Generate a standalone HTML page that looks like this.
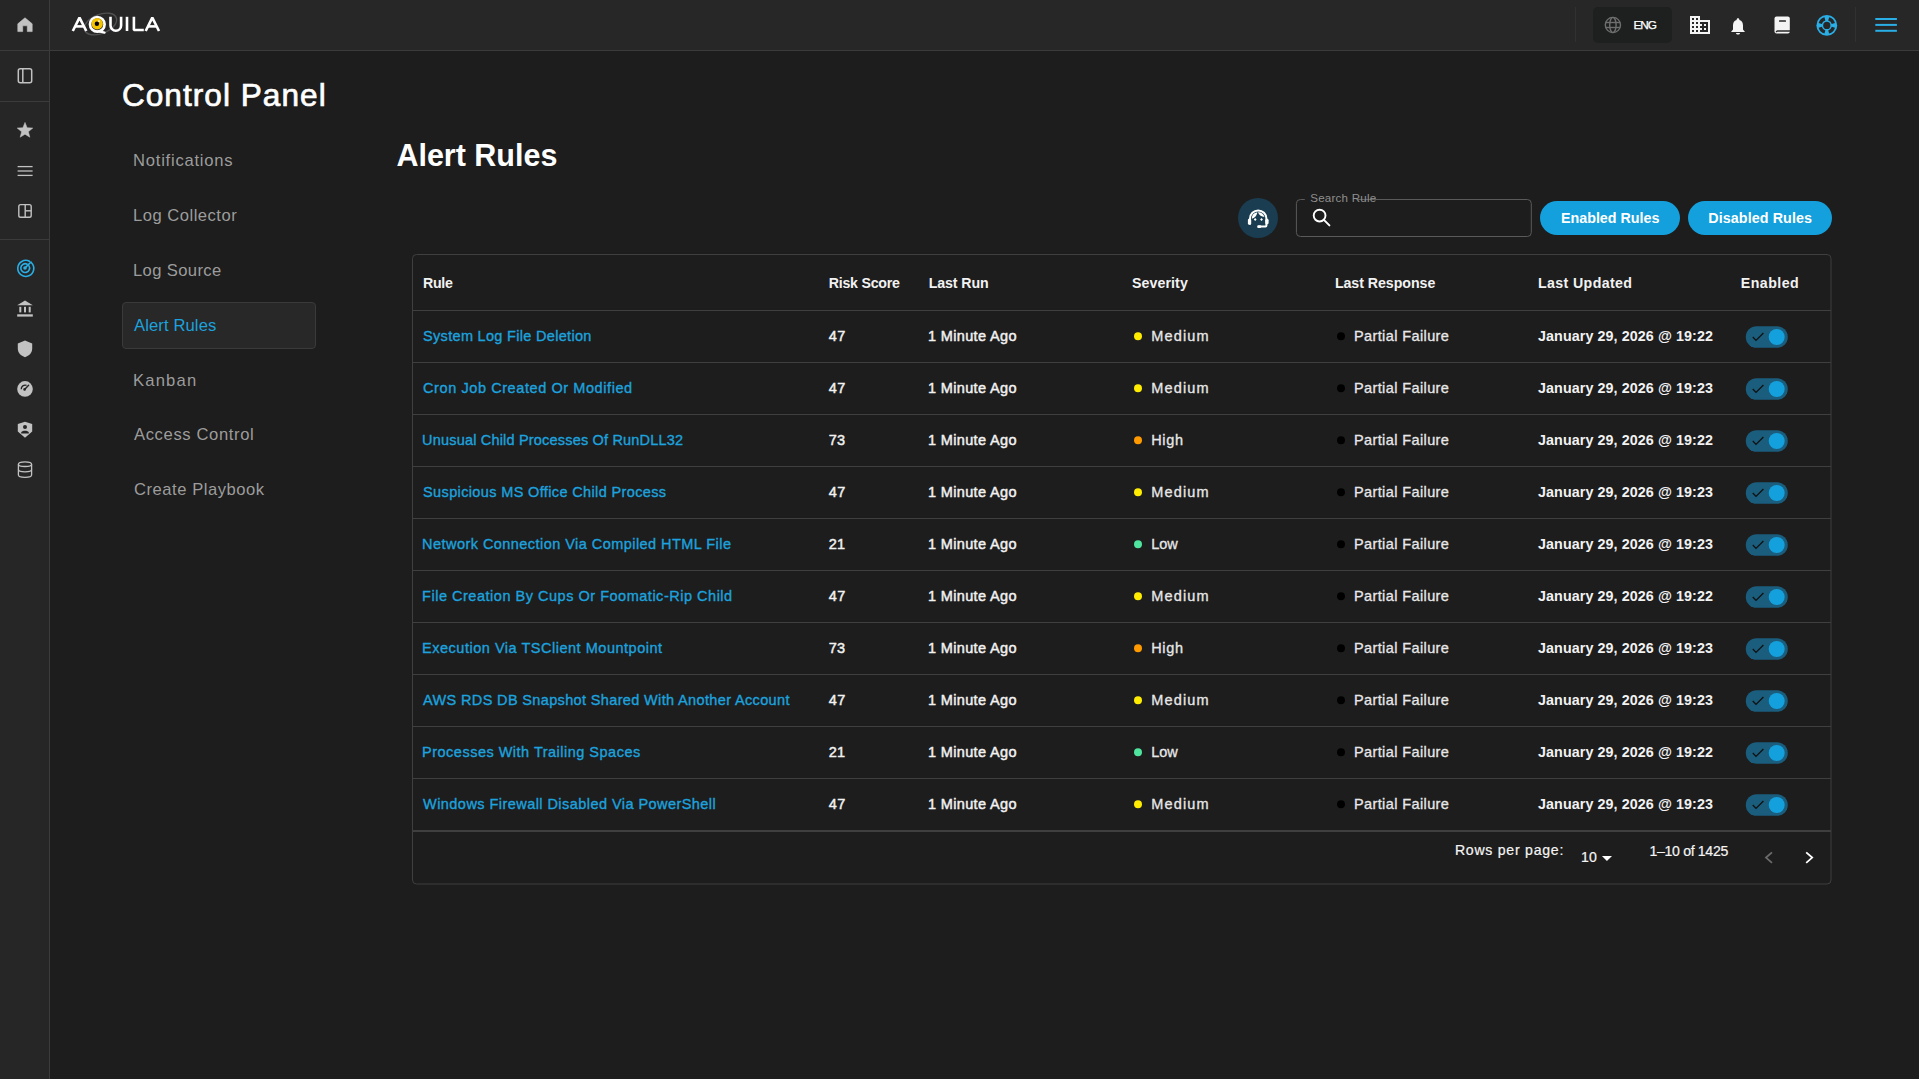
<!DOCTYPE html>
<html><head><meta charset="utf-8"><title>Control Panel - Alert Rules</title>
<style>
html,body{margin:0;padding:0;width:1919px;height:1079px;overflow:hidden;background:#1d1d1d;font-family:"Liberation Sans",sans-serif;}
.t{position:absolute;white-space:nowrap;line-height:normal;}
.abs{position:absolute;}
svg{position:absolute;overflow:visible;}
</style></head><body>

<div class="abs" style="left:0;top:0;width:49px;height:1079px;background:#262626;"></div>
<div class="abs" style="left:49px;top:0;width:1px;height:1079px;background:#3b3b3b;"></div>
<div class="abs" style="left:50px;top:0;width:1869px;height:50px;background:#272727;"></div>
<div class="abs" style="left:0;top:50px;width:1919px;height:1px;background:#3b3b3b;"></div>
<div class="abs" style="left:0;top:101px;width:49px;height:1px;background:#3b3b3b;"></div>
<div class="abs" style="left:0;top:239px;width:49px;height:1px;background:#3b3b3b;"></div>
<div class="abs" style="left:1575px;top:7px;width:1px;height:35px;background:#313131;"></div>
<div class="abs" style="left:1855px;top:7px;width:1px;height:35px;background:#313131;"></div>
<div class="abs" style="left:1593px;top:7px;width:79px;height:36px;background:#1e1f1f;border-radius:5px;"></div>
<svg width="1919" height="1079" style="left:0;top:0;" viewBox="0 0 1919 1079"><path d="M25 17.8 L32.2 23.8 V31.6 H27.3 V25.8 H22.7 V31.6 H17.8 V23.8 Z" fill="#c2c2c2" stroke="#c2c2c2" stroke-width="0.6" stroke-linejoin="round"/><rect x="18.3" y="68.7" width="13.4" height="14" rx="2" fill="none" stroke="#c2c2c2" stroke-width="1.5"/><line x1="22.8" y1="68.7" x2="22.8" y2="82.7" stroke="#c2c2c2" stroke-width="1.5"/><polygon points="25.00,122.40 27.12,127.69 32.80,128.07 28.42,131.71 29.82,137.23 25.00,134.20 20.18,137.23 21.58,131.71 17.20,128.07 22.88,127.69" fill="#c2c2c2" stroke="#c2c2c2" stroke-width="0.5" stroke-linejoin="round"/><line x1="17.6" y1="166.6" x2="32.6" y2="166.6" stroke="#c2c2c2" stroke-width="1.3"/><line x1="17.6" y1="171.0" x2="32.6" y2="171.0" stroke="#c2c2c2" stroke-width="1.3"/><line x1="17.6" y1="175.4" x2="32.6" y2="175.4" stroke="#c2c2c2" stroke-width="1.3"/><rect x="18.8" y="204.6" width="12.4" height="12.6" rx="1.8" fill="none" stroke="#c2c2c2" stroke-width="1.4"/><line x1="25.2" y1="204.6" x2="25.2" y2="217.2" stroke="#c2c2c2" stroke-width="1.4"/><line x1="25.2" y1="210.8" x2="31.2" y2="210.8" stroke="#c2c2c2" stroke-width="1.4"/><g fill="none" stroke="#29aee6" stroke-width="1.6" stroke-linecap="round"><path d="M31.2 262.5 A8 8 0 1 1 29.5 261.3"/><path d="M28.8 265.6 A4.4 4.4 0 1 1 27.2 264.2"/><line x1="25" y1="268" x2="31" y2="262"/></g><circle cx="25" cy="268" r="1.8" fill="#29aee6"/><path d="M25 300.6 L32.8 305.2 H17.2 Z" fill="#c2c2c2"/><rect x="19.3" y="306.8" width="2" height="5.6" fill="#c2c2c2"/><rect x="24.0" y="306.8" width="2" height="5.6" fill="#c2c2c2"/><rect x="28.7" y="306.8" width="2" height="5.6" fill="#c2c2c2"/><rect x="17.2" y="314.3" width="15.6" height="2.3" fill="#c2c2c2"/><path d="M25 340.6 L32.2 343.4 V348.6 C32.2 352.8 29.2 356 25 357.2 C20.8 356 17.8 352.8 17.8 348.6 V343.4 Z" fill="#c2c2c2"/><circle cx="25" cy="388.9" r="7.8" fill="#c2c2c2"/><path d="M21.2 389.2 A4 4 0 0 1 26.5 385.3" fill="none" stroke="#262626" stroke-width="1.3"/><line x1="24.6" y1="389.4" x2="28.6" y2="385.2" stroke="#262626" stroke-width="1.4" stroke-linecap="round"/><circle cx="24.6" cy="389.4" r="1.3" fill="#262626"/><path d="M25 421.7 L32.2 424 V431.6 L25 437.8 L17.8 431.6 V424 Z" fill="#c2c2c2"/><circle cx="25" cy="427" r="2" fill="#262626"/><path d="M21.2 432.6 C21.6 430 28.4 430 28.8 432.6 V433.4 H21.2 Z" fill="#262626"/><g fill="none" stroke="#c2c2c2" stroke-width="1.3"><ellipse cx="25" cy="464.2" rx="6.6" ry="2.3"/><path d="M18.4 464.2 V475 C18.4 476.4 21.4 477.3 25 477.3 C28.6 477.3 31.6 476.4 31.6 475 V464.2"/><path d="M18.4 469.6 C18.4 471 21.4 471.9 25 471.9 C28.6 471.9 31.6 471 31.6 469.6"/></g><ellipse cx="100.5" cy="24" rx="17" ry="9.5" transform="rotate(-22 100.5 24)" fill="none" stroke="#505050" stroke-width="1.4"/><g fill="none" stroke="#ffffff" stroke-width="2.6" stroke-linejoin="bevel"><path d="M72.8 31 L79.5 17.6 L86.3 31"/><path d="M75.2 26.4 H83.8"/><path d="M110.5 16.8 V25.4 A5.3 5.3 0 0 0 121.1 25.4 V16.8"/><path d="M127 16.8 V31"/><path d="M133.9 16.8 V30 H143.8"/><path d="M145.7 31 L152.3 17.6 L159 31"/><path d="M148 26.4 H156.6"/></g><circle cx="97.3" cy="24.3" r="7.3" fill="none" stroke="#ffffff" stroke-width="2.7"/><path d="M98.5 31.2 L104.5 32.6" stroke="#ffffff" stroke-width="2.4" stroke-linecap="round"/><circle cx="97.2" cy="23.7" r="5.7" fill="#f5c400"/><circle cx="96.9" cy="23.8" r="2.2" fill="#000"/><circle cx="99" cy="21.1" r="0.9" fill="#fff"/><g fill="none" stroke="#6e6e6e" stroke-width="1.4"><circle cx="1612.9" cy="25" r="7.6"/><ellipse cx="1612.9" cy="25" rx="3.2" ry="7.6"/><line x1="1605.6" y1="22.5" x2="1620.2" y2="22.5"/><line x1="1605.6" y1="27.5" x2="1620.2" y2="27.5"/></g><g transform="translate(1688,13)"><path fill="#f4f4f4" d="M12 7V3H2v18h20V7H12zM6 19H4v-2h2v2zm0-4H4v-2h2v2zm0-4H4V9h2v2zm0-4H4V5h2v2zm4 12H8v-2h2v2zm0-4H8v-2h2v2zm0-4H8V9h2v2zm0-4H8V5h2v2zm10 12h-8v-2h2v-2h-2v-2h2v-2h-2V9h8v10zm-2-8h-2v2h2v-2zm0 4h-2v2h2v-2z"/></g><path fill="#f4f4f4" d="M1738 18.3 C1738.9 18.3 1739.4 19 1739.4 19.9 C1742 20.6 1743 22.8 1743 25.4 V29.6 L1745 31.9 H1731 L1733 29.6 V25.4 C1733 22.8 1734 20.6 1736.6 19.9 C1736.6 19 1737.1 18.3 1738 18.3 Z"/><path fill="#f4f4f4" d="M1736 33 H1740 C1740 34 1739 34.6 1738 34.6 C1737 34.6 1736 34 1736 33Z"/><rect x="1774.5" y="16.4" width="15.3" height="17" rx="2" fill="#f4f4f4"/><rect x="1779" y="20.2" width="7" height="1.5" rx="0.5" fill="#272727"/><path d="M1790.2 31 H1777.5 A1.3 1.3 0 0 0 1776.2 32.3" fill="none" stroke="#272727" stroke-width="1.3"/><circle cx="1826.8" cy="25.4" r="10.4" fill="#29aee6"/><path d="M1834.97 27.74 A8.50 8.50 0 0 1 1829.14 33.57 L1828.23 30.40 A5.20 5.20 0 0 0 1831.80 26.83 Z" fill="#272727"/><path d="M1824.46 33.57 A8.50 8.50 0 0 1 1818.63 27.74 L1821.80 26.83 A5.20 5.20 0 0 0 1825.37 30.40 Z" fill="#272727"/><path d="M1818.63 23.06 A8.50 8.50 0 0 1 1824.46 17.23 L1825.37 20.40 A5.20 5.20 0 0 0 1821.80 23.97 Z" fill="#272727"/><path d="M1829.14 17.23 A8.50 8.50 0 0 1 1834.97 23.06 L1831.80 23.97 A5.20 5.20 0 0 0 1828.23 20.40 Z" fill="#272727"/><circle cx="1826.8" cy="25.4" r="3.6" fill="#272727"/><line x1="1875.3" y1="19.0" x2="1896.9" y2="19.0" stroke="#29aee6" stroke-width="2"/><line x1="1875.3" y1="24.9" x2="1896.9" y2="24.9" stroke="#29aee6" stroke-width="2"/><line x1="1875.3" y1="30.8" x2="1896.9" y2="30.8" stroke="#29aee6" stroke-width="2"/><circle cx="1258" cy="218" r="20" fill="#1b3d51"/><g fill="none" stroke="#fff" stroke-width="2"><path d="M1250 224.6 V218.6 A8.2 8.2 0 0 1 1266.4 218.6 V225.8 Q1266.4 226.6 1265.6 226.6 H1258.4"/></g><rect x="1247.9" y="218.4" width="3.3" height="6.4" rx="1.5" fill="#fff"/><rect x="1265.3" y="218.8" width="3.3" height="5.4" rx="1.5" fill="#fff"/><rect x="1257.2" y="225.3" width="4" height="2.6" rx="1.2" fill="#fff"/><path d="M1251.8 218.8 A6.7 6.7 0 0 1 1257.4 212.2 Q1256.9 216.7 1251.8 218.8 Z" fill="#fff"/><path d="M1257.9 212.2 A6.7 6.7 0 0 1 1264.5 216.9 Q1259.9 216.7 1257.9 212.2 Z" fill="#fff"/><path d="M1255.2 218.1 L1256.6 219.5 L1255.2 220.9 L1253.8 219.5 Z" fill="#fff"/><path d="M1261.5 218.1 L1262.9 219.5 L1261.5 220.9 L1260.1 219.5 Z" fill="#fff"/><path d="M1304.8 199.5 H1300.4 A4 4 0 0 0 1296.4 203.5 V232.5 A4 4 0 0 0 1300.4 236.5 H1527.3 A4 4 0 0 0 1531.3 232.5 V203.5 A4 4 0 0 0 1527.3 199.5 H1358" fill="none" stroke="#5a5a5a" stroke-width="1"/><circle cx="1319.6" cy="215.6" r="5.9" fill="none" stroke="#fff" stroke-width="1.9"/><line x1="1323.9" y1="219.9" x2="1329.4" y2="225.4" stroke="#fff" stroke-width="2" stroke-linecap="round"/><rect x="1540" y="201" width="140" height="34" rx="17" fill="#14a0dc"/><rect x="1688" y="201" width="144" height="34" rx="17" fill="#14a0dc"/><rect x="412.5" y="254.5" width="1418.5" height="629.5" rx="4" fill="none" stroke="#3f3f3f" stroke-width="1"/><line x1="413" y1="310.5" x2="1831" y2="310.5" stroke="#3f3f3f" stroke-width="1"/><line x1="413" y1="362.5" x2="1831" y2="362.5" stroke="#3f3f3f" stroke-width="1"/><line x1="413" y1="414.5" x2="1831" y2="414.5" stroke="#3f3f3f" stroke-width="1"/><line x1="413" y1="466.5" x2="1831" y2="466.5" stroke="#3f3f3f" stroke-width="1"/><line x1="413" y1="518.5" x2="1831" y2="518.5" stroke="#3f3f3f" stroke-width="1"/><line x1="413" y1="570.5" x2="1831" y2="570.5" stroke="#3f3f3f" stroke-width="1"/><line x1="413" y1="622.5" x2="1831" y2="622.5" stroke="#3f3f3f" stroke-width="1"/><line x1="413" y1="674.5" x2="1831" y2="674.5" stroke="#3f3f3f" stroke-width="1"/><line x1="413" y1="726.5" x2="1831" y2="726.5" stroke="#3f3f3f" stroke-width="1"/><line x1="413" y1="778.5" x2="1831" y2="778.5" stroke="#3f3f3f" stroke-width="1"/><line x1="413" y1="830.5" x2="1831" y2="830.5" stroke="#3f3f3f" stroke-width="1"/><line x1="413" y1="831.5" x2="1831" y2="831.5" stroke="#3f3f3f" stroke-width="1"/><circle cx="1138" cy="336.2" r="4" fill="#ffec00"/><circle cx="1341" cy="336.2" r="4" fill="#000"/><rect x="1745.8" y="326.2" width="42" height="21.6" rx="10.8" fill="#1a5d7d"/><circle cx="1776.7" cy="337.0" r="8" fill="#14a0dc"/><path d="M1752.8 337.0 L1756 340.4 L1763.4 333.0" fill="none" stroke="#111" stroke-width="1.3"/><circle cx="1138" cy="388.2" r="4" fill="#ffec00"/><circle cx="1341" cy="388.2" r="4" fill="#000"/><rect x="1745.8" y="378.2" width="42" height="21.6" rx="10.8" fill="#1a5d7d"/><circle cx="1776.7" cy="389.0" r="8" fill="#14a0dc"/><path d="M1752.8 389.0 L1756 392.4 L1763.4 385.0" fill="none" stroke="#111" stroke-width="1.3"/><circle cx="1138" cy="440.2" r="4" fill="#ff9a00"/><circle cx="1341" cy="440.2" r="4" fill="#000"/><rect x="1745.8" y="430.2" width="42" height="21.6" rx="10.8" fill="#1a5d7d"/><circle cx="1776.7" cy="441.0" r="8" fill="#14a0dc"/><path d="M1752.8 441.0 L1756 444.4 L1763.4 437.0" fill="none" stroke="#111" stroke-width="1.3"/><circle cx="1138" cy="492.2" r="4" fill="#ffec00"/><circle cx="1341" cy="492.2" r="4" fill="#000"/><rect x="1745.8" y="482.2" width="42" height="21.6" rx="10.8" fill="#1a5d7d"/><circle cx="1776.7" cy="493.0" r="8" fill="#14a0dc"/><path d="M1752.8 493.0 L1756 496.4 L1763.4 489.0" fill="none" stroke="#111" stroke-width="1.3"/><circle cx="1138" cy="544.2" r="4" fill="#4fe59f"/><circle cx="1341" cy="544.2" r="4" fill="#000"/><rect x="1745.8" y="534.2" width="42" height="21.6" rx="10.8" fill="#1a5d7d"/><circle cx="1776.7" cy="545.0" r="8" fill="#14a0dc"/><path d="M1752.8 545.0 L1756 548.4 L1763.4 541.0" fill="none" stroke="#111" stroke-width="1.3"/><circle cx="1138" cy="596.2" r="4" fill="#ffec00"/><circle cx="1341" cy="596.2" r="4" fill="#000"/><rect x="1745.8" y="586.2" width="42" height="21.6" rx="10.8" fill="#1a5d7d"/><circle cx="1776.7" cy="597.0" r="8" fill="#14a0dc"/><path d="M1752.8 597.0 L1756 600.4 L1763.4 593.0" fill="none" stroke="#111" stroke-width="1.3"/><circle cx="1138" cy="648.2" r="4" fill="#ff9a00"/><circle cx="1341" cy="648.2" r="4" fill="#000"/><rect x="1745.8" y="638.2" width="42" height="21.6" rx="10.8" fill="#1a5d7d"/><circle cx="1776.7" cy="649.0" r="8" fill="#14a0dc"/><path d="M1752.8 649.0 L1756 652.4 L1763.4 645.0" fill="none" stroke="#111" stroke-width="1.3"/><circle cx="1138" cy="700.2" r="4" fill="#ffec00"/><circle cx="1341" cy="700.2" r="4" fill="#000"/><rect x="1745.8" y="690.2" width="42" height="21.6" rx="10.8" fill="#1a5d7d"/><circle cx="1776.7" cy="701.0" r="8" fill="#14a0dc"/><path d="M1752.8 701.0 L1756 704.4 L1763.4 697.0" fill="none" stroke="#111" stroke-width="1.3"/><circle cx="1138" cy="752.2" r="4" fill="#4fe59f"/><circle cx="1341" cy="752.2" r="4" fill="#000"/><rect x="1745.8" y="742.2" width="42" height="21.6" rx="10.8" fill="#1a5d7d"/><circle cx="1776.7" cy="753.0" r="8" fill="#14a0dc"/><path d="M1752.8 753.0 L1756 756.4 L1763.4 749.0" fill="none" stroke="#111" stroke-width="1.3"/><circle cx="1138" cy="804.2" r="4" fill="#ffec00"/><circle cx="1341" cy="804.2" r="4" fill="#000"/><rect x="1745.8" y="794.2" width="42" height="21.6" rx="10.8" fill="#1a5d7d"/><circle cx="1776.7" cy="805.0" r="8" fill="#14a0dc"/><path d="M1752.8 805.0 L1756 808.4 L1763.4 801.0" fill="none" stroke="#111" stroke-width="1.3"/><path d="M1601.9 856 H1612 L1606.95 861 Z" fill="#fff"/><path d="M1772 852.3 L1766 857.6 L1772 862.9" fill="none" stroke="#6b6b6b" stroke-width="1.8"/><path d="M1806.2 852.3 L1812.2 857.6 L1806.2 862.9" fill="none" stroke="#fff" stroke-width="1.8"/></svg>
<div class="abs" style="left:122px;top:302px;width:192px;height:45px;background:#282828;border:1px solid #3a3a3a;border-radius:4px;"></div>
<div class="t" id="cp" style="left:121.95px;top:77.00px;font-size:31.60px;font-weight:400;color:#ffffff;letter-spacing:1.024px;-webkit-text-stroke:0.70px #ffffff;">Control Panel</div>
<div class="t" id="nav0" style="left:133.00px;top:151.00px;font-size:16.60px;font-weight:400;color:#9c9c9c;letter-spacing:0.768px;">Notifications</div>
<div class="t" id="nav1" style="left:133.00px;top:206.21px;font-size:16.60px;font-weight:400;color:#9c9c9c;letter-spacing:0.496px;">Log Collector</div>
<div class="t" id="nav2" style="left:133.00px;top:260.91px;font-size:16.60px;font-weight:400;color:#9c9c9c;letter-spacing:0.373px;">Log Source</div>
<div class="t" id="nav3" style="left:134.00px;top:316.00px;font-size:16.60px;font-weight:400;color:#1ca2de;letter-spacing:0.114px;">Alert Rules</div>
<div class="t" id="nav4" style="left:133.00px;top:371.41px;font-size:16.60px;font-weight:400;color:#9c9c9c;letter-spacing:1.183px;">Kanban</div>
<div class="t" id="nav5" style="left:134.00px;top:425.00px;font-size:16.60px;font-weight:400;color:#9c9c9c;letter-spacing:0.623px;">Access Control</div>
<div class="t" id="nav6" style="left:134.00px;top:479.91px;font-size:16.60px;font-weight:400;color:#9c9c9c;letter-spacing:0.530px;">Create Playbook</div>
<div class="t" id="ar" style="left:396.40px;top:137.80px;font-size:30.50px;font-weight:700;color:#ffffff;letter-spacing:-0.006px;">Alert Rules</div>
<div class="t" id="eng" style="left:1633.42px;top:18.21px;font-size:11.80px;font-weight:400;color:#ffffff;letter-spacing:-0.969px;-webkit-text-stroke:0.25px #ffffff;">ENG</div>
<div class="t" id="slabel" style="left:1310.20px;top:190.80px;font-size:11.60px;font-weight:400;color:#8f8f8f;letter-spacing:0.215px;">Search Rule</div>
<div class="t" id="btn1" style="left:1561.00px;top:210.11px;font-size:14.30px;font-weight:700;color:#ffffff;letter-spacing:-0.014px;">Enabled Rules</div>
<div class="t" id="btn2" style="left:1708.30px;top:210.00px;font-size:14.30px;font-weight:700;color:#ffffff;letter-spacing:0.089px;">Disabled Rules</div>
<div class="t" id="h0" style="left:423.10px;top:274.80px;font-size:14.20px;font-weight:700;color:#f2f2f2;letter-spacing:-0.318px;">Rule</div>
<div class="t" id="h1" style="left:828.70px;top:274.80px;font-size:14.20px;font-weight:700;color:#f2f2f2;letter-spacing:-0.239px;">Risk Score</div>
<div class="t" id="h2" style="left:928.70px;top:274.80px;font-size:14.20px;font-weight:700;color:#f2f2f2;letter-spacing:-0.104px;">Last Run</div>
<div class="t" id="h3" style="left:1132.00px;top:274.80px;font-size:14.20px;font-weight:700;color:#f2f2f2;letter-spacing:0.083px;">Severity</div>
<div class="t" id="h4" style="left:1334.90px;top:274.80px;font-size:14.20px;font-weight:700;color:#f2f2f2;letter-spacing:-0.044px;">Last Response</div>
<div class="t" id="h5" style="left:1538.00px;top:274.80px;font-size:14.20px;font-weight:700;color:#f2f2f2;letter-spacing:0.373px;">Last Updated</div>
<div class="t" id="h6" style="left:1740.80px;top:274.80px;font-size:14.20px;font-weight:700;color:#f2f2f2;letter-spacing:0.447px;">Enabled</div>
<div class="t" id="r0l" style="left:423.07px;top:327.80px;font-size:14.50px;font-weight:400;color:#1ca2de;letter-spacing:0.310px;-webkit-text-stroke:0.35px #1ca2de;">System Log File Deletion</div>
<div class="t" id="r0s" style="left:828.83px;top:327.80px;font-size:14.50px;font-weight:400;color:#f2f2f2;letter-spacing:0.286px;-webkit-text-stroke:0.45px #f2f2f2;">47</div>
<div class="t" id="r0r" style="left:927.93px;top:327.80px;font-size:14.50px;font-weight:400;color:#f2f2f2;letter-spacing:0.361px;-webkit-text-stroke:0.45px #f2f2f2;">1 Minute Ago</div>
<div class="t" id="r0v" style="left:1151.15px;top:327.80px;font-size:14.50px;font-weight:400;color:#e8e8e8;letter-spacing:1.181px;-webkit-text-stroke:0.30px #e8e8e8;">Medium</div>
<div class="t" id="r0p" style="left:1353.95px;top:327.80px;font-size:14.50px;font-weight:400;color:#e8e8e8;letter-spacing:0.394px;-webkit-text-stroke:0.30px #e8e8e8;">Partial Failure</div>
<div class="t" id="r0d" style="left:1538.00px;top:327.80px;font-size:14.30px;font-weight:700;color:#f2f2f2;letter-spacing:0.089px;">January 29, 2026 @ 19:22</div>
<div class="t" id="r1l" style="left:423.07px;top:379.80px;font-size:14.50px;font-weight:400;color:#1ca2de;letter-spacing:0.581px;-webkit-text-stroke:0.35px #1ca2de;">Cron Job Created Or Modified</div>
<div class="t" id="r1s" style="left:828.83px;top:379.80px;font-size:14.50px;font-weight:400;color:#f2f2f2;letter-spacing:0.286px;-webkit-text-stroke:0.45px #f2f2f2;">47</div>
<div class="t" id="r1r" style="left:927.93px;top:379.80px;font-size:14.50px;font-weight:400;color:#f2f2f2;letter-spacing:0.361px;-webkit-text-stroke:0.45px #f2f2f2;">1 Minute Ago</div>
<div class="t" id="r1v" style="left:1151.15px;top:379.80px;font-size:14.50px;font-weight:400;color:#e8e8e8;letter-spacing:1.181px;-webkit-text-stroke:0.30px #e8e8e8;">Medium</div>
<div class="t" id="r1p" style="left:1353.95px;top:379.80px;font-size:14.50px;font-weight:400;color:#e8e8e8;letter-spacing:0.394px;-webkit-text-stroke:0.30px #e8e8e8;">Partial Failure</div>
<div class="t" id="r1d" style="left:1538.00px;top:379.80px;font-size:14.30px;font-weight:700;color:#f2f2f2;letter-spacing:0.089px;">January 29, 2026 @ 19:23</div>
<div class="t" id="r2l" style="left:422.07px;top:431.80px;font-size:14.50px;font-weight:400;color:#1ca2de;letter-spacing:0.186px;-webkit-text-stroke:0.35px #1ca2de;">Unusual Child Processes Of RunDLL32</div>
<div class="t" id="r2s" style="left:828.83px;top:431.80px;font-size:14.50px;font-weight:400;color:#f2f2f2;letter-spacing:-0.014px;-webkit-text-stroke:0.45px #f2f2f2;">73</div>
<div class="t" id="r2r" style="left:927.93px;top:431.80px;font-size:14.50px;font-weight:400;color:#f2f2f2;letter-spacing:0.361px;-webkit-text-stroke:0.45px #f2f2f2;">1 Minute Ago</div>
<div class="t" id="r2v" style="left:1151.15px;top:431.80px;font-size:14.50px;font-weight:400;color:#e8e8e8;letter-spacing:0.681px;-webkit-text-stroke:0.30px #e8e8e8;">High</div>
<div class="t" id="r2p" style="left:1353.95px;top:431.80px;font-size:14.50px;font-weight:400;color:#e8e8e8;letter-spacing:0.394px;-webkit-text-stroke:0.30px #e8e8e8;">Partial Failure</div>
<div class="t" id="r2d" style="left:1538.00px;top:431.80px;font-size:14.30px;font-weight:700;color:#f2f2f2;letter-spacing:0.089px;">January 29, 2026 @ 19:22</div>
<div class="t" id="r3l" style="left:423.07px;top:483.80px;font-size:14.50px;font-weight:400;color:#1ca2de;letter-spacing:0.363px;-webkit-text-stroke:0.35px #1ca2de;">Suspicious MS Office Child Process</div>
<div class="t" id="r3s" style="left:828.83px;top:483.80px;font-size:14.50px;font-weight:400;color:#f2f2f2;letter-spacing:0.286px;-webkit-text-stroke:0.45px #f2f2f2;">47</div>
<div class="t" id="r3r" style="left:927.93px;top:483.80px;font-size:14.50px;font-weight:400;color:#f2f2f2;letter-spacing:0.361px;-webkit-text-stroke:0.45px #f2f2f2;">1 Minute Ago</div>
<div class="t" id="r3v" style="left:1151.15px;top:483.80px;font-size:14.50px;font-weight:400;color:#e8e8e8;letter-spacing:1.181px;-webkit-text-stroke:0.30px #e8e8e8;">Medium</div>
<div class="t" id="r3p" style="left:1353.95px;top:483.80px;font-size:14.50px;font-weight:400;color:#e8e8e8;letter-spacing:0.394px;-webkit-text-stroke:0.30px #e8e8e8;">Partial Failure</div>
<div class="t" id="r3d" style="left:1538.00px;top:483.80px;font-size:14.30px;font-weight:700;color:#f2f2f2;letter-spacing:0.089px;">January 29, 2026 @ 19:23</div>
<div class="t" id="r4l" style="left:422.07px;top:535.80px;font-size:14.50px;font-weight:400;color:#1ca2de;letter-spacing:0.451px;-webkit-text-stroke:0.35px #1ca2de;">Network Connection Via Compiled HTML File</div>
<div class="t" id="r4s" style="left:828.83px;top:535.80px;font-size:14.50px;font-weight:400;color:#f2f2f2;letter-spacing:0.000px;-webkit-text-stroke:0.45px #f2f2f2;">21</div>
<div class="t" id="r4r" style="left:927.93px;top:535.80px;font-size:14.50px;font-weight:400;color:#f2f2f2;letter-spacing:0.361px;-webkit-text-stroke:0.45px #f2f2f2;">1 Minute Ago</div>
<div class="t" id="r4v" style="left:1151.15px;top:535.80px;font-size:14.50px;font-weight:400;color:#e8e8e8;letter-spacing:-0.014px;-webkit-text-stroke:0.30px #e8e8e8;">Low</div>
<div class="t" id="r4p" style="left:1353.95px;top:535.80px;font-size:14.50px;font-weight:400;color:#e8e8e8;letter-spacing:0.394px;-webkit-text-stroke:0.30px #e8e8e8;">Partial Failure</div>
<div class="t" id="r4d" style="left:1538.00px;top:535.80px;font-size:14.30px;font-weight:700;color:#f2f2f2;letter-spacing:0.089px;">January 29, 2026 @ 19:23</div>
<div class="t" id="r5l" style="left:422.07px;top:587.80px;font-size:14.50px;font-weight:400;color:#1ca2de;letter-spacing:0.515px;-webkit-text-stroke:0.35px #1ca2de;">File Creation By Cups Or Foomatic-Rip Child</div>
<div class="t" id="r5s" style="left:828.83px;top:587.80px;font-size:14.50px;font-weight:400;color:#f2f2f2;letter-spacing:0.286px;-webkit-text-stroke:0.45px #f2f2f2;">47</div>
<div class="t" id="r5r" style="left:927.93px;top:587.80px;font-size:14.50px;font-weight:400;color:#f2f2f2;letter-spacing:0.361px;-webkit-text-stroke:0.45px #f2f2f2;">1 Minute Ago</div>
<div class="t" id="r5v" style="left:1151.15px;top:587.80px;font-size:14.50px;font-weight:400;color:#e8e8e8;letter-spacing:1.181px;-webkit-text-stroke:0.30px #e8e8e8;">Medium</div>
<div class="t" id="r5p" style="left:1353.95px;top:587.80px;font-size:14.50px;font-weight:400;color:#e8e8e8;letter-spacing:0.394px;-webkit-text-stroke:0.30px #e8e8e8;">Partial Failure</div>
<div class="t" id="r5d" style="left:1538.00px;top:587.80px;font-size:14.30px;font-weight:700;color:#f2f2f2;letter-spacing:0.089px;">January 29, 2026 @ 19:22</div>
<div class="t" id="r6l" style="left:422.07px;top:639.80px;font-size:14.50px;font-weight:400;color:#1ca2de;letter-spacing:0.515px;-webkit-text-stroke:0.35px #1ca2de;">Execution Via TSClient Mountpoint</div>
<div class="t" id="r6s" style="left:828.83px;top:639.80px;font-size:14.50px;font-weight:400;color:#f2f2f2;letter-spacing:-0.014px;-webkit-text-stroke:0.45px #f2f2f2;">73</div>
<div class="t" id="r6r" style="left:927.93px;top:639.80px;font-size:14.50px;font-weight:400;color:#f2f2f2;letter-spacing:0.361px;-webkit-text-stroke:0.45px #f2f2f2;">1 Minute Ago</div>
<div class="t" id="r6v" style="left:1151.15px;top:639.80px;font-size:14.50px;font-weight:400;color:#e8e8e8;letter-spacing:0.681px;-webkit-text-stroke:0.30px #e8e8e8;">High</div>
<div class="t" id="r6p" style="left:1353.95px;top:639.80px;font-size:14.50px;font-weight:400;color:#e8e8e8;letter-spacing:0.394px;-webkit-text-stroke:0.30px #e8e8e8;">Partial Failure</div>
<div class="t" id="r6d" style="left:1538.00px;top:639.80px;font-size:14.30px;font-weight:700;color:#f2f2f2;letter-spacing:0.089px;">January 29, 2026 @ 19:23</div>
<div class="t" id="r7l" style="left:423.07px;top:691.80px;font-size:14.50px;font-weight:400;color:#1ca2de;letter-spacing:0.355px;-webkit-text-stroke:0.35px #1ca2de;">AWS RDS DB Snapshot Shared With Another Account</div>
<div class="t" id="r7s" style="left:828.83px;top:691.80px;font-size:14.50px;font-weight:400;color:#f2f2f2;letter-spacing:0.286px;-webkit-text-stroke:0.45px #f2f2f2;">47</div>
<div class="t" id="r7r" style="left:927.93px;top:691.80px;font-size:14.50px;font-weight:400;color:#f2f2f2;letter-spacing:0.361px;-webkit-text-stroke:0.45px #f2f2f2;">1 Minute Ago</div>
<div class="t" id="r7v" style="left:1151.15px;top:691.80px;font-size:14.50px;font-weight:400;color:#e8e8e8;letter-spacing:1.181px;-webkit-text-stroke:0.30px #e8e8e8;">Medium</div>
<div class="t" id="r7p" style="left:1353.95px;top:691.80px;font-size:14.50px;font-weight:400;color:#e8e8e8;letter-spacing:0.394px;-webkit-text-stroke:0.30px #e8e8e8;">Partial Failure</div>
<div class="t" id="r7d" style="left:1538.00px;top:691.80px;font-size:14.30px;font-weight:700;color:#f2f2f2;letter-spacing:0.089px;">January 29, 2026 @ 19:23</div>
<div class="t" id="r8l" style="left:422.07px;top:743.80px;font-size:14.50px;font-weight:400;color:#1ca2de;letter-spacing:0.491px;-webkit-text-stroke:0.35px #1ca2de;">Processes With Trailing Spaces</div>
<div class="t" id="r8s" style="left:828.83px;top:743.80px;font-size:14.50px;font-weight:400;color:#f2f2f2;letter-spacing:0.000px;-webkit-text-stroke:0.45px #f2f2f2;">21</div>
<div class="t" id="r8r" style="left:927.93px;top:743.80px;font-size:14.50px;font-weight:400;color:#f2f2f2;letter-spacing:0.361px;-webkit-text-stroke:0.45px #f2f2f2;">1 Minute Ago</div>
<div class="t" id="r8v" style="left:1151.15px;top:743.80px;font-size:14.50px;font-weight:400;color:#e8e8e8;letter-spacing:-0.014px;-webkit-text-stroke:0.30px #e8e8e8;">Low</div>
<div class="t" id="r8p" style="left:1353.95px;top:743.80px;font-size:14.50px;font-weight:400;color:#e8e8e8;letter-spacing:0.394px;-webkit-text-stroke:0.30px #e8e8e8;">Partial Failure</div>
<div class="t" id="r8d" style="left:1538.00px;top:743.80px;font-size:14.30px;font-weight:700;color:#f2f2f2;letter-spacing:0.089px;">January 29, 2026 @ 19:22</div>
<div class="t" id="r9l" style="left:423.07px;top:795.80px;font-size:14.50px;font-weight:400;color:#1ca2de;letter-spacing:0.444px;-webkit-text-stroke:0.35px #1ca2de;">Windows Firewall Disabled Via PowerShell</div>
<div class="t" id="r9s" style="left:828.83px;top:795.80px;font-size:14.50px;font-weight:400;color:#f2f2f2;letter-spacing:0.286px;-webkit-text-stroke:0.45px #f2f2f2;">47</div>
<div class="t" id="r9r" style="left:927.93px;top:795.80px;font-size:14.50px;font-weight:400;color:#f2f2f2;letter-spacing:0.361px;-webkit-text-stroke:0.45px #f2f2f2;">1 Minute Ago</div>
<div class="t" id="r9v" style="left:1151.15px;top:795.80px;font-size:14.50px;font-weight:400;color:#e8e8e8;letter-spacing:1.181px;-webkit-text-stroke:0.30px #e8e8e8;">Medium</div>
<div class="t" id="r9p" style="left:1353.95px;top:795.80px;font-size:14.50px;font-weight:400;color:#e8e8e8;letter-spacing:0.394px;-webkit-text-stroke:0.30px #e8e8e8;">Partial Failure</div>
<div class="t" id="r9d" style="left:1538.00px;top:795.80px;font-size:14.30px;font-weight:700;color:#f2f2f2;letter-spacing:0.089px;">January 29, 2026 @ 19:23</div>
<div class="t" id="rpp" style="left:1454.90px;top:841.91px;font-size:14.10px;font-weight:400;color:#f5f5f5;letter-spacing:0.746px;-webkit-text-stroke:0.20px #f5f5f5;">Rows per page:</div>
<div class="t" id="ten" style="left:1581.10px;top:848.61px;font-size:14.10px;font-weight:400;color:#f5f5f5;letter-spacing:0.000px;-webkit-text-stroke:0.20px #f5f5f5;">10</div>
<div class="t" id="cnt" style="left:1649.50px;top:842.80px;font-size:14.10px;font-weight:400;color:#f5f5f5;letter-spacing:-0.323px;-webkit-text-stroke:0.20px #f5f5f5;">1–10 of 1425</div>
</body></html>
